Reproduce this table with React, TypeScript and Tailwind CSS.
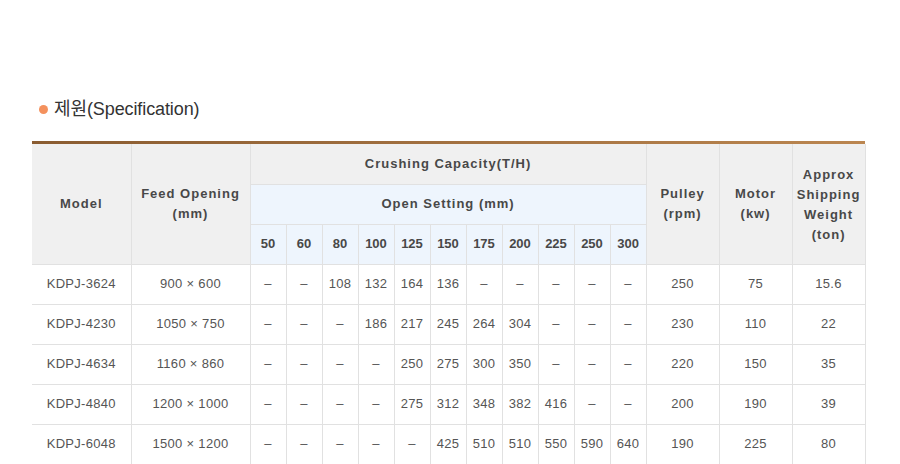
import React from "react";

const settings = ["50", "60", "80", "100", "125", "150", "175", "200", "225", "250", "300"];

interface SpecRow {
  model: string;
  feed: string;
  caps: string[];
  pulley: string;
  motor: string;
  weight: string;
}

const rows: SpecRow[] = [
  { model: "KDPJ-3624", feed: "900 × 600", caps: ["-", "-", "108", "132", "164", "136", "-", "-", "-", "-", "-"], pulley: "250", motor: "75", weight: "15.6" },
  { model: "KDPJ-4230", feed: "1050 × 750", caps: ["-", "-", "-", "186", "217", "245", "264", "304", "-", "-", "-"], pulley: "230", motor: "110", weight: "22" },
  { model: "KDPJ-4634", feed: "1160 × 860", caps: ["-", "-", "-", "-", "250", "275", "300", "350", "-", "-", "-"], pulley: "220", motor: "150", weight: "35" },
  { model: "KDPJ-4840", feed: "1200 × 1000", caps: ["-", "-", "-", "-", "275", "312", "348", "382", "416", "-", "-"], pulley: "200", motor: "190", weight: "39" },
  { model: "KDPJ-6048", feed: "1500 × 1200", caps: ["-", "-", "-", "-", "-", "425", "510", "510", "550", "590", "640"], pulley: "190", motor: "225", weight: "80" },
];

const th = "border border-[#e1e1e1] bg-[#f0f0f0] font-bold text-[13px] leading-[20px] tracking-[1px] text-[#484848] text-center align-middle";
const sub = "border border-[#e1e1e1] bg-[#eef5fd] font-bold text-[13px] tracking-[1px] text-[#484848] text-center align-middle";
const td = "border border-[#e1e1e1] text-[13px] tracking-[0.3px] text-[#555] text-center align-middle";

export default function App() {
  return (
    <div className="w-[900px] h-[464px] bg-white overflow-hidden pl-[32px] pt-[97px] font-['Liberation_Sans','Noto_Sans_CJK_KR',sans-serif]">
      <div className="flex items-center h-[24px] pl-[7px] gap-[6px]">
        <span className="w-[9px] h-[9px] rounded-full bg-[#f4915d]" />
        <span className="text-[18px] text-[#333] tracking-[-0.1px]">제원(Specification)</span>
      </div>

      <div className="mt-[20px] w-[833px] h-[3px] bg-linear-to-r from-[#8a5c31] to-[#bb8650]" />

      <table className="w-[833px] border-collapse table-fixed [&_tr>*:first-child]:border-l-0">
        <colgroup>
          <col className="w-[99px]" />
          <col className="w-[119px]" />
          {settings.map((s) => (
            <col key={s} className="w-[36px]" />
          ))}
          <col className="w-[73px]" />
          <col className="w-[73px]" />
          <col className="w-[73px]" />
        </colgroup>
        <thead>
          <tr className="h-[40px]">
            <th rowSpan={3} className={th + " border-t-0"}>Model</th>
            <th rowSpan={3} className={th + " border-t-0"}>
              Feed Opening
              <br />
              (mm)
            </th>
            <th colSpan={11} className={th + " border-t-0"}>Crushing Capacity(T/H)</th>
            <th rowSpan={3} className={th + " border-t-0"}>
              Pulley
              <br />
              (rpm)
            </th>
            <th rowSpan={3} className={th + " border-t-0"}>
              Motor
              <br />
              (kw)
            </th>
            <th rowSpan={3} className={th + " border-t-0 pt-[2px]"}>
              Approx
              <br />
              Shipping
              <br />
              Weight
              <br />
              (ton)
            </th>
          </tr>
          <tr className="h-[40px]">
            <th colSpan={11} className={sub}>Open Setting (mm)</th>
          </tr>
          <tr className="h-[40px]">
            {settings.map((s) => (
              <th key={s} className={sub + " px-0 tracking-normal"}>{s}</th>
            ))}
          </tr>
        </thead>
        <tbody>
          {rows.map((r) => (
            <tr key={r.model} className="h-[40px]">
              <td className={td}>{r.model}</td>
              <td className={td}>{r.feed}</td>
              {r.caps.map((c, i) => (
                <td key={i} className={td + " px-0"}>{c === "-" ? "–" : c}</td>
              ))}
              <td className={td}>{r.pulley}</td>
              <td className={td}>{r.motor}</td>
              <td className={td}>{r.weight}</td>
            </tr>
          ))}
        </tbody>
      </table>
    </div>
  );
}
